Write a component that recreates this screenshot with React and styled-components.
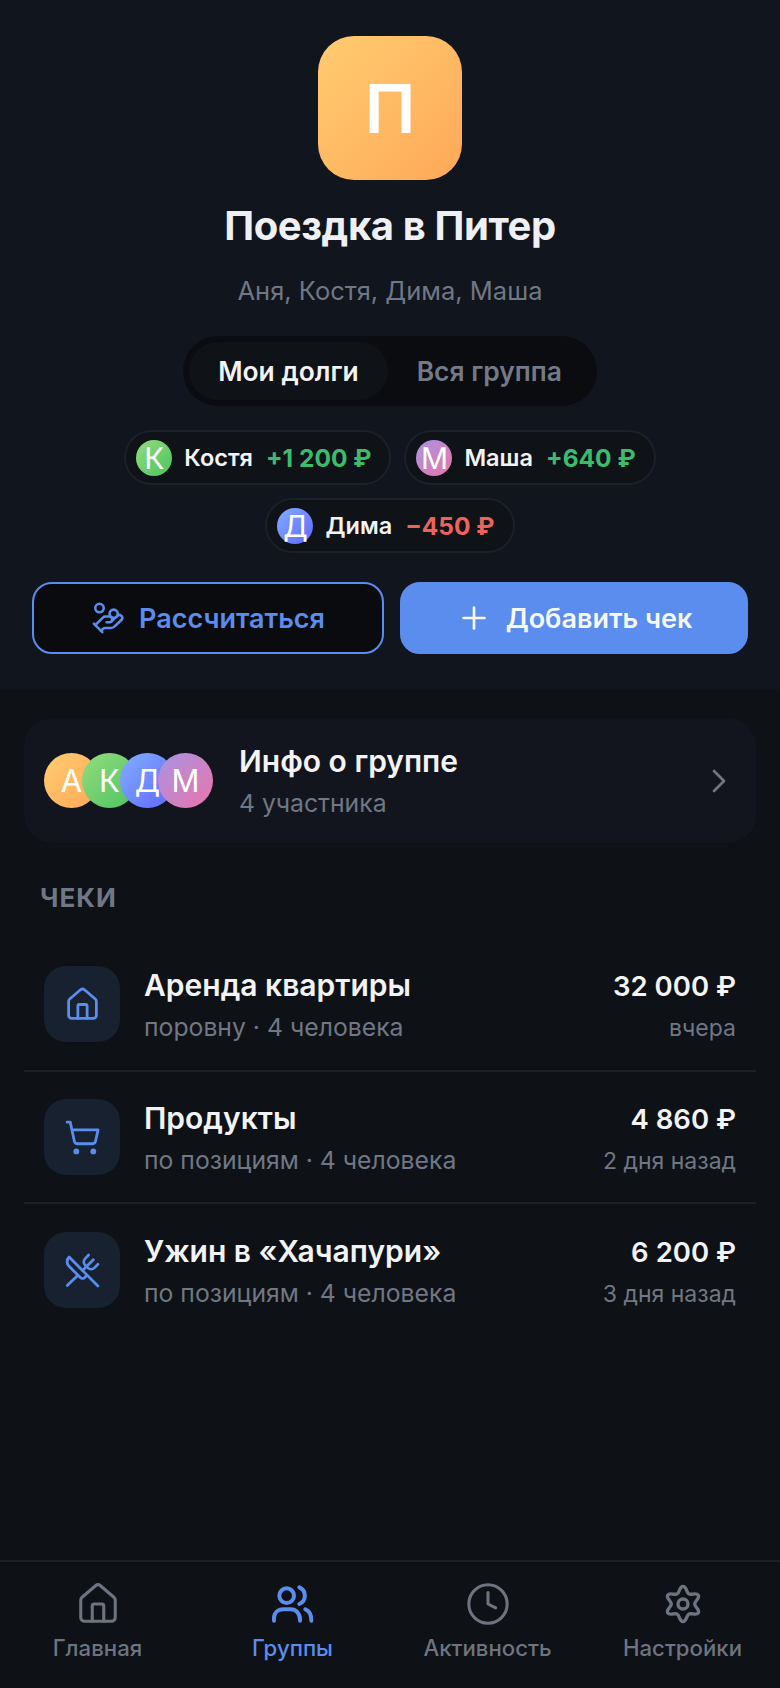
import styled, { createGlobalStyle } from "styled-components";
import {
  ChevronRight,
  Clock,
  HandCoins,
  House,
  Plus,
  ShoppingCart,
  UtensilsCrossed,
} from "lucide-react";

const gradients = {
  orange: "#ffcc70, #ffa858",
  green: "#95dc7c, #4cc362",
  blue: "#82aeff, #5f68ff",
  pink: "#a894e4, #ea74aa",
};

const debts = [
  { name: "Костя", letter: "К", tone: "green", amount: "+1 200 ₽", positive: true },
  { name: "Маша", letter: "М", tone: "pink", amount: "+640 ₽", positive: true },
  { name: "Дима", letter: "Д", tone: "blue", amount: "−450 ₽", positive: false },
];

const members = [
  { letter: "А", tone: "orange" },
  { letter: "К", tone: "green" },
  { letter: "Д", tone: "blue" },
  { letter: "М", tone: "pink" },
];

const receipts = [
  { icon: House, title: "Аренда квартиры", sub: "поровну · 4 человека", amount: "32 000 ₽", date: "вчера" },
  { icon: ShoppingCart, title: "Продукты", sub: "по позициям · 4 человека", amount: "4 860 ₽", date: "2 дня назад" },
  { icon: UtensilsCrossed, title: "Ужин в «Хачапури»", sub: "по позициям · 4 человека", amount: "6 200 ₽", date: "3 дня назад" },
];

// six rounded lobes around the centre, tangents perpendicular to the radius
const gearPath = () => {
  const point = (r, deg, along = 0) => {
    const a = (deg * Math.PI) / 180;
    const x = r * Math.cos(a) - along * Math.sin(a);
    const y = r * Math.sin(a) + along * Math.cos(a);
    return `${x.toFixed(1)} ${y.toFixed(1)}`;
  };
  let d = `M${point(53, -90)}`;
  for (let i = 0; i < 6; i++) {
    const lobe = -90 + i * 60;
    const valley = lobe + 30;
    const next = lobe + 60;
    d += ` C${point(53, lobe, 11)} ${point(35, valley, -9)} ${point(35, valley)}`;
    d += ` C${point(35, valley, 9)} ${point(53, next, -11)} ${point(53, next)}`;
  }
  return `${d} Z`;
};

const GearIcon = () => (
  <svg width="46" height="46" viewBox="-69 -69 138 138" fill="none" stroke="currentColor" strokeWidth="10" strokeLinejoin="round">
    <path d={gearPath()} />
    <circle r="15" />
  </svg>
);

const GroupIcon = () => (
  <svg width="46" height="46" viewBox="88 33 138 138" fill="none" stroke="currentColor" strokeWidth="12" strokeLinecap="round">
    <circle cx="138" cy="77" r="22" />
    <path d="M176 52C198 62 198 92 176 102" />
    <path d="M100 152V145C100 128 112 118 128 118H150C166 118 178 130 178 150V152" />
    <path d="M194 118C206 122 212 134 212 152" />
  </svg>
);

const tabs = [
  { icon: <House size={46} strokeWidth={1.6} />, label: "Главная" },
  { icon: <GroupIcon />, label: "Группы", active: true },
  { icon: <Clock size={46} strokeWidth={1.6} />, label: "Активность" },
  { icon: <GearIcon />, label: "Настройки" },
];

export default function App() {
  return (
    <>
      <GlobalStyle />
      <Screen>
        <Hero>
          <Logo>П</Logo>
          <Title>Поездка в Питер</Title>
          <Names>Аня, Костя, Дима, Маша</Names>
          <Segments>
            <Segment $active>Мои долги</Segment>
            <Segment>Вся группа</Segment>
          </Segments>
          <Chips>
            {debts.map((d) => (
              <Chip key={d.name}>
                <ChipAvatar $tone={d.tone}>{d.letter}</ChipAvatar>
                <ChipName>{d.name}</ChipName>
                <ChipAmount $positive={d.positive}>{d.amount}</ChipAmount>
              </Chip>
            ))}
          </Chips>
          <Actions>
            <ActionButton $outline>
              <HandCoins size={34} strokeWidth={1.8} />
              Рассчитаться
            </ActionButton>
            <ActionButton>
              <Plus size={36} strokeWidth={1.8} />
              Добавить чек
            </ActionButton>
          </Actions>
        </Hero>

        <Content>
          <InfoCard>
            <AvatarStack>
              {members.map((m) => (
                <StackAvatar key={m.letter} $tone={m.tone}>
                  {m.letter}
                </StackAvatar>
              ))}
            </AvatarStack>
            <InfoText>
              <RowTitle>Инфо о группе</RowTitle>
              <RowSub>4 участника</RowSub>
            </InfoText>
            <ChevronRight size={40} strokeWidth={1.6} color="#6f7682" />
          </InfoCard>

          <SectionTitle>ЧЕКИ</SectionTitle>

          <Receipts>
            {receipts.map(({ icon: Icon, ...r }) => (
              <Receipt key={r.title}>
                <ReceiptIcon>
                  <Icon size={37} strokeWidth={1.8} />
                </ReceiptIcon>
                <ReceiptMain>
                  <RowTitle>{r.title}</RowTitle>
                  <RowSub>{r.sub}</RowSub>
                </ReceiptMain>
                <ReceiptSide>
                  <Amount>{r.amount}</Amount>
                  <DateText>{r.date}</DateText>
                </ReceiptSide>
              </Receipt>
            ))}
          </Receipts>
        </Content>

        <TabBar>
          {tabs.map(({ icon, label, active }) => (
            <Tab key={label} $active={active}>
              {icon}
              <span>{label}</span>
            </Tab>
          ))}
        </TabBar>
      </Screen>
    </>
  );
}

const GlobalStyle = createGlobalStyle`
  * {
    box-sizing: border-box;
  }
  body {
    margin: 0;
    background: #0e1116;
    font-family: Inter, "Noto Sans", sans-serif;
    color: #f2f3f5;
  }
`;

const Screen = styled.div`
  width: 780px;
  height: 1688px;
  display: flex;
  flex-direction: column;
  overflow: hidden;
  background: #0e1116;
`;

const Hero = styled.header`
  height: 690px;
  flex-shrink: 0;
  padding: 36px 32px 0;
  display: flex;
  flex-direction: column;
  align-items: center;
  background: #11151e;
`;

const Logo = styled.div`
  width: 144px;
  height: 144px;
  border-radius: 36px;
  display: flex;
  align-items: center;
  justify-content: center;
  background: linear-gradient(135deg, ${gradients.orange});
  color: #fff;
  font-size: 68px;
  font-weight: 600;
`;

const Title = styled.h1`
  margin: 22px 0 0;
  font-size: 40px;
  line-height: 48px;
  font-weight: 700;
  letter-spacing: -0.4px;
  color: #eff0f3;
`;

const Names = styled.div`
  margin-top: 26px;
  font-size: 25.5px;
  line-height: 30px;
  color: #707785;
`;

const Segments = styled.div`
  margin-top: 30px;
  height: 70px;
  padding: 6px;
  display: flex;
  border-radius: 35px;
  background: #0a0c10;
`;

const Segment = styled.div`
  padding: 0 29px;
  display: flex;
  align-items: center;
  border-radius: 29px;
  font-size: 26.4px;
  font-weight: 600;
  color: ${(p) => (p.$active ? "#f2f3f5" : "#737a87")};
  background: ${(p) => (p.$active ? "#0f1217" : "transparent")};
`;

const Chips = styled.div`
  margin-top: 24px;
  display: flex;
  flex-wrap: wrap;
  justify-content: center;
  gap: 13px;
  width: 600px;
`;

const Chip = styled.div`
  height: 55px;
  padding: 0 18px 0 10px;
  display: flex;
  align-items: center;
  border: 2px solid #1c2027;
  border-radius: 28px;
  background: #0f1217;
`;

const ChipAvatar = styled.div`
  width: 36px;
  height: 36px;
  margin-right: 12px;
  border-radius: 50%;
  display: flex;
  align-items: center;
  justify-content: center;
  background: linear-gradient(135deg, ${(p) => gradients[p.$tone]});
  color: #fff;
  font-size: 30px;
  font-weight: 400;
`;

const ChipName = styled.span`
  margin-right: 13px;
  font-size: 23.5px;
  font-weight: 600;
`;

const ChipAmount = styled.span`
  font-size: 24.5px;
  font-weight: 700;
  color: ${(p) => (p.$positive ? "#3dbb6c" : "#ee625c")};
`;

const Actions = styled.div`
  margin-top: 29px;
  width: 716px;
  display: grid;
  grid-template-columns: 352px 348px;
  gap: 16px;
`;

const ActionButton = styled.button`
  height: 72px;
  display: flex;
  align-items: center;
  justify-content: center;
  gap: 14px;
  padding: 0;
  border-radius: 20px;
  border: 2px solid #5b8def;
  font-family: inherit;
  font-size: 27px;
  font-weight: 600;
  color: ${(p) => (p.$outline ? "#5b8def" : "#f7f8fa")};
  background: ${(p) => (p.$outline ? "#090b0f" : "#5b8def")};
`;

const Content = styled.main`
  flex: 1;
  padding: 28px 24px 0;
`;

const InfoCard = styled.div`
  height: 125px;
  padding: 0 17px 0 20px;
  display: flex;
  align-items: center;
  border-radius: 28px;
  background: #12151d;
`;

const AvatarStack = styled.div`
  width: 190px;
  flex-shrink: 0;
  display: flex;
`;

const StackAvatar = styled.div`
  width: 55px;
  height: 55px;
  flex-shrink: 0;
  margin-left: -17px;
  border-radius: 50%;
  display: flex;
  align-items: center;
  justify-content: center;
  background: linear-gradient(135deg, ${(p) => gradients[p.$tone]});
  color: #fff;
  font-size: 31px;
  font-weight: 400;

  &:first-child {
    margin-left: 0;
  }
`;

const InfoText = styled.div`
  flex: 1;
  padding-left: 5px;
  display: flex;
  flex-direction: column;
  gap: 9px;
`;

const RowTitle = styled.div`
  font-size: 30px;
  line-height: 36px;
  font-weight: 600;
  color: #f2f3f5;
`;

const Amount = styled(RowTitle)`
  font-size: 27.5px;
`;

const RowSub = styled.div`
  font-size: 24.75px;
  line-height: 30px;
  color: #707785;
`;

const DateText = styled(RowSub)`
  font-size: 23px;
`;

const SectionTitle = styled.h2`
  margin: 40px 0 0 16px;
  font-size: 26px;
  line-height: 30px;
  font-weight: 700;
  letter-spacing: 1px;
  color: #707785;
`;

const Receipts = styled.div`
  margin-top: 25px;
`;

const Receipt = styled.div`
  height: 132px;
  padding: 0 20px;
  display: flex;
  align-items: center;
  border-bottom: 2px solid #1c2027;

  &:first-child {
    height: 134px;
  }
  &:last-child {
    border-bottom: 0;
  }
`;

const ReceiptIcon = styled.div`
  width: 76px;
  height: 76px;
  flex-shrink: 0;
  border-radius: 22px;
  display: flex;
  align-items: center;
  justify-content: center;
  background: #17212f;
  color: #5b8def;
`;

const ReceiptMain = styled.div`
  flex: 1;
  padding-left: 24px;
  display: flex;
  flex-direction: column;
  gap: 9px;
`;

const ReceiptSide = styled.div`
  padding-top: 3px;
  display: flex;
  flex-direction: column;
  align-items: flex-end;
  gap: 9px;
`;

const TabBar = styled.nav`
  height: 128px;
  flex-shrink: 0;
  padding-top: 19px;
  display: grid;
  grid-template-columns: repeat(4, 1fr);
  border-top: 2px solid #1c2027;
  background: #0e1116;
`;

const Tab = styled.div`
  display: flex;
  flex-direction: column;
  align-items: center;
  font-size: 22.2px;
  font-weight: 500;
  line-height: 26px;
  color: ${(p) => (p.$active ? "#5b8def" : "#6d7480")};

  span {
    margin-top: 8px;
  }
`;
